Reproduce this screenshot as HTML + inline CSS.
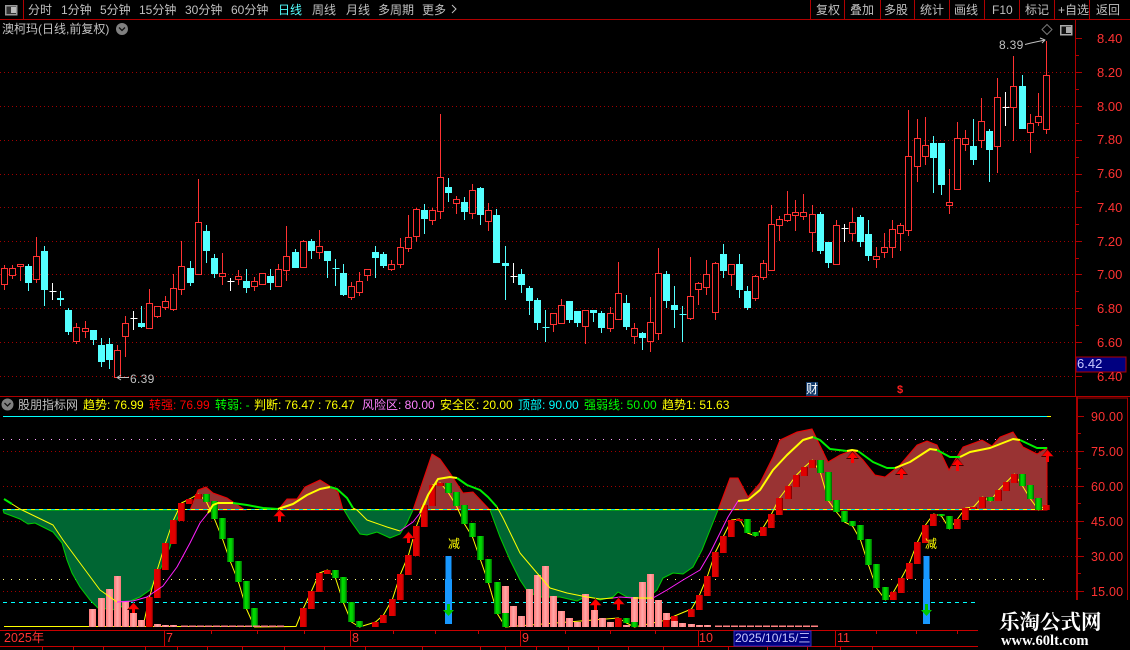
<!DOCTYPE html>
<html lang="zh-CN">
<head>
<meta charset="utf-8">
<title>澳柯玛</title>
<style>
html,body{margin:0;padding:0;background:#000;}
#w{position:relative;width:1130px;height:650px;overflow:hidden;background:#000;font-family:"Liberation Sans","WenQuanYi Zen Hei","Noto Sans CJK SC",sans-serif;font-size:12px;line-height:14px;color:#c0c0c0;}
#w svg{position:absolute;left:0;top:0;}
#w span{position:absolute;white-space:nowrap;}
.r{color:#ff3232;font-size:13px;}
.l{color:#ff3232;font-size:12.5px;letter-spacing:.2px}
.y{color:#ffff00}.g{color:#00ff00}.c{color:#00ffff}.p{color:#ff80ff}.d{color:#ff0000}
</style>
</head>
<body>
<div id="w">
<svg id="s" width="1130" height="650" viewBox="0 0 1130 650" shape-rendering="crispEdges"></svg>

<span style="left:28px;top:3px">分时</span>
<span style="left:61px;top:3px">1分钟</span>
<span style="left:100px;top:3px">5分钟</span>
<span style="left:139px;top:3px">15分钟</span>
<span style="left:185px;top:3px">30分钟</span>
<span style="left:231px;top:3px">60分钟</span>
<span class="c" style="left:278px;top:3px;color:#54ffff">日线</span>
<span style="left:312px;top:3px">周线</span>
<span style="left:346px;top:3px">月线</span>
<span style="left:378px;top:3px">多周期</span>
<span style="left:422px;top:3px">更多</span>
<span style="left:816px;top:3px">复权</span>
<span style="left:850px;top:3px">叠加</span>
<span style="left:884px;top:3px">多股</span>
<span style="left:920px;top:3px">统计</span>
<span style="left:954px;top:3px">画线</span>
<span style="left:992px;top:3px">F10</span>
<span style="left:1025px;top:3px">标记</span>
<span style="left:1058px;top:3px">+自选</span>
<span style="left:1096px;top:3px">返回</span>
<span style="left:2px;top:22px">澳柯玛(日线,前复权)</span>

<span style="left:999px;top:38px;letter-spacing:.3px">8.39</span>
<span style="left:130px;top:372px;letter-spacing:.3px">6.39</span>

<span class="r" style="left:1097px;top:32px">8.40</span>
<span class="r" style="left:1097px;top:66px">8.20</span>
<span class="r" style="left:1097px;top:100px">8.00</span>
<span class="r" style="left:1097px;top:133px">7.80</span>
<span class="r" style="left:1097px;top:167px">7.60</span>
<span class="r" style="left:1097px;top:201px">7.40</span>
<span class="r" style="left:1097px;top:235px">7.20</span>
<span class="r" style="left:1097px;top:268px">7.00</span>
<span class="r" style="left:1097px;top:302px">6.80</span>
<span class="r" style="left:1097px;top:336px">6.60</span>
<span class="r" style="left:1097px;top:370px">6.40</span>
<span style="left:1077px;top:357px;font-size:13px;color:#c8c8ff;z-index:2">6.42</span>

<span style="left:806px;top:382px;width:12px;height:14px;background:#123a6a;color:#fff">财</span>
<span style="left:897px;top:383px;color:#ff2020;font-size:11px;font-weight:bold">$</span>

<span style="left:18px;top:398px;font-size:12px">股朋指标网</span>
<span class="y" style="left:83px;top:398px">趋势: 76.99</span>
<span class="d" style="left:149px;top:398px">转强: 76.99</span>
<span class="g" style="left:215px;top:398px">转弱: -</span>
<span class="y" style="left:254px;top:398px">判断: 76.47 : 76.47</span>
<span class="p" style="left:362px;top:398px">风险区: 80.00</span>
<span class="y" style="left:440px;top:398px">安全区: 20.00</span>
<span class="c" style="left:518px;top:398px">顶部: 90.00</span>
<span class="g" style="left:584px;top:398px">强弱线: 50.00</span>
<span class="y" style="left:662px;top:398px">趋势1: 51.63</span>

<span class="l" style="left:1091px;top:410px">90.00</span>
<span class="l" style="left:1091px;top:445px">75.00</span>
<span class="l" style="left:1091px;top:480px">60.00</span>
<span class="l" style="left:1091px;top:515px">45.00</span>
<span class="l" style="left:1091px;top:550px">30.00</span>
<span class="l" style="left:1091px;top:585px">15.00</span>

<span class="y" style="left:448px;top:537px">减</span>
<span class="y" style="left:925px;top:537px">减</span>

<span style="left:4px;top:631px;color:#ff3232;font-size:12.5px">2025年</span>
<span style="left:166px;top:631px;color:#ff3232;font-size:12.5px">7</span>
<span style="left:352px;top:631px;color:#ff3232;font-size:12.5px">8</span>
<span style="left:522px;top:631px;color:#ff3232;font-size:12.5px">9</span>
<span style="left:699px;top:631px;color:#ff3232;font-size:12.5px">10</span>
<span style="left:735px;top:631px;color:#c8c8ff">2025/10/15/三</span>
<span style="left:837px;top:631px;color:#ff3232;font-size:12.5px">11</span>

<span style="left:999px;top:608px;font-family:'Noto Serif CJK SC','Liberation Serif',serif;font-weight:bold;font-size:20.5px;line-height:24px;color:#fff">乐淘公式网</span>
<span style="left:1001px;top:633px;font-family:'Liberation Serif',serif;font-weight:bold;font-size:14.6px;line-height:16px;color:#fff">www.60lt.com</span>
</div>

<script>
var o='';
function L(x1,y1,x2,y2,c,w,extra){o+='<line x1="'+x1+'" y1="'+y1+'" x2="'+x2+'" y2="'+y2+'" stroke="'+c+'" stroke-width="'+(w||1)+'" '+(extra||'')+'/>';}
function R(x,y,w,h,f,extra){o+='<rect x="'+x+'" y="'+y+'" width="'+w+'" height="'+h+'" fill="'+f+'" '+(extra||'')+'/>';}
function P(d,f,s,w,extra){o+='<path d="'+d+'" fill="'+(f||'none')+'" stroke="'+(s||'none')+'" stroke-width="'+(w||1)+'" '+(extra||'')+'/>';}
function PL(p,c,w){o+='<polyline points="'+p+'" fill="none" stroke="'+c+'" stroke-width="'+(w||1)+'" shape-rendering="auto" stroke-linejoin="round"/>';}

o+='<defs><linearGradient id="gr"><stop offset="0" stop-color="#e00000"/><stop offset=".75" stop-color="#e00000"/><stop offset="1" stop-color="#6a0000"/></linearGradient><linearGradient id="gg"><stop offset="0" stop-color="#006a00"/><stop offset=".35" stop-color="#00e000"/><stop offset=".7" stop-color="#00c800"/><stop offset="1" stop-color="#006000"/></linearGradient><linearGradient id="gp"><stop offset="0" stop-color="#ff7878"/><stop offset=".5" stop-color="#ffa8a8"/><stop offset="1" stop-color="#ff7878"/></linearGradient></defs>';

var RD='#b00000';
// top bars
L(0,19.5,1130,19.5,RD);
L(23.5,0,23.5,19,RD);
[810,844,880,914,949,984,1019,1054,1089].forEach(function(x){L(x+.5,0,x+.5,19,RD);});
// left icon
P('M5.5 5.5h11v9h-11z','#333','#999',1.5);R(11,7,5,6,'#bbb');
// more chevron
P('M452 5l4 4-4 4','none','#c0c0c0',1,'shape-rendering="auto"');
// title chevron
o+='<circle cx="122" cy="29" r="6" fill="#808080" shape-rendering="auto"/>';
P('M119 27.5l3 3 3-3','none','#111',1.3,'shape-rendering="auto"');
// diamond & icon right
P('M1047 24.5l5 5-5 5-5-5z','none','#777',1,'shape-rendering="auto"');
P('M1060.5 25.5h11v9h-11z','#111','#aaa',1.5);R(1066,27,5,6,'#aaa');

// main grid
[72.5,106.5,140.5,174.5,207.5,241.5,274.5,308.5,342.5,376.5].forEach(function(y){L(0,y,1075,y,'#a00000',1,'stroke-dasharray="1 3"');});
// axis
L(1075.5,20,1075.5,397,RD);
[38,72,106,140,174,207,241,274,308,342,376].forEach(function(y){L(1076,y+.5,1082,y+.5,RD);if(y<376)L(1076,y+17.5,1079,y+17.5,RD);});

// candles [type,hi,top,bot,lo]
var C=[['r',265,268.3,283.7,289.7],['r',265,268,274.7,278.7],['r',264,264.3,266.3,281],['c',264,266.3,283,290.7],['r',237,256.3,278.7,282.7],['c',246,251,289.7,305.7],['w',283,290.7,290.7,299.7],['c',291,298,299.7,305.7],['c',308.3,310,332,334.7],['r',323.3,327.3,340.7,343.7],['r',321,328.3,330.7,337.7],['c',330,330,340,344.7],['c',338,345,361.7,366.7],['c',338,344,360,368.7],['r',345.3,350.3,376.7,376.7],['r',316,323.3,335.7,356.7],['w',311,318.3,318.3,329.7],['c',306,323,327,328],['r',289,303.3,327.7,327.7],['r',306,306.3,315.7,317.7],['r',296,301.3,306.7,309.7],['r',274.3,288.3,308.7,310.7],['r',241.3,266.3,288.7,294.7],['c',261,268,283,285.7],['r',179,222.3,273.7,273.7],['c',225,231,251,262.7],['c',254,258,274,278],['r',253,273.3,276.3,285],['w',277.7,280.7,280.7,290.7],['r',270,276.3,278.7,285],['c',269,281,288,293],['r',277,281.3,285.7,290.7],['r',273,273.3,283.7,284.7],['c',269,276,283,289.7],['r',264,269.3,285.7,285.7],['r',226,256.3,269.7,281],['c',249,252,268,268],['r',240,241.3,266.7,267.7],['c',239,241,251,259],['r',230,246.3,251.7,259],['c',251,251,261,278],['d',259,268.3,268.3,286],['c',264,273,295,296],['r',282,286.3,296.7,299.7],['r',272,281.3,291.7,296],['r',269,269.3,274.7,280.7],['c',246,252,258,277.7],['c',252,254,266,268],['r',260,264.3,268.7,270.7],['r',238.3,247,263.7,267.7],
['r',215.3,237.3,247.7,251.7],['r',208.3,209.3,236.3,242],['c',204,210,219,234],['r',208,210.3,219.7,225],['r',114,177.3,210.7,219],['c',178,187,193,202],['r',196,199.3,202.7,214],['c',197,202,212,220],['r',184,190.3,212.7,219],['c',187,188,215,225],['r',203,210.3,220.7,231],['c',209,215,263,263],['c',246,263,266,300],['w',263,276,276,283],['c',269,274,285,293],['c',286,288,301,315],['c',298,300,323,330],['d',310,327.3,327.3,342],['r',313,313.3,323.7,332],['r',299,305.3,322.7,322.7],['c',301,301,320,323],['c',311,311,323,327],['r',310,310.3,325.7,344],['c',310,310,313,322],['c',311,313,328,333],['r',307,313.3,327.7,332],['r',262,293.3,318.7,318.7],['c',295,303,327,330],['r',323,328.3,335.7,344],['c',332,333,338,350],['r',297,322.3,340.7,352],['r',248,273.3,332.7,340],['c',271,274,301,308],['c',286,305,310,328],['d',306,314,314,342],['r',257,296.3,317.7,320],['r',282,283.3,288.7,305],['r',260,274.3,286.7,295],['r',262,263.3,311.7,320],['c',244,254,271,278],['r',264,264.3,273.7,286],['c',254,264,290,298],['c',286,291,308,310],
['r',275,276.3,298,301],['r',260,263.3,276.7,280],['r',205,224.3,269.7,271],['r',216,219.3,224.7,241],['r',191,214.3,219.7,221.7],['r',200,212.3,214.7,231],['r',194,212.3,215.7,220],['r',205,214.3,231.7,252],['c',212,214,251,254],['c',242,242,263,268],['r',220,225.3,263.7,263.7],['w',224,227.7,227.7,242],['r',208,222.3,232.7,241],['c',215,217,242,247],['c',220,234,256,261],['r',247,256.3,258.7,268],['r',233,247.3,251.7,258],['r',220,229.3,246.7,258],['r',223,225.3,232.7,251],['r',110,156.3,229.7,236],['r',119,138.3,165.7,182],['r',117,145.3,155.7,165],['c',136,143,158,193],['c',143,143,185,195],['r',169,202.3,204.7,214],['r',122,138.3,188.7,188.7],['r',130,138.3,143.7,151],['c',119,146,160,165],['r',98,121.3,139.7,148],['c',129,131,150,182],['r',78,97.3,145.7,173],['w',92,107.3,107.3,126],['r',56,86.3,106.7,141],['c',75,86,129,129],['r',114,123.3,131.7,153],['r',93,116.3,121.7,126],['r',41,75.3,128.7,133.7]];
var RED='#ff3232',CY='#54ffff';
C.forEach(function(c,i){
 var x=Math.floor(4.3+i*8.077)+.5,t=c[0],hi=Math.round(c[1]),top=Math.round(c[2]),bot=Math.round(c[3]),lo=Math.round(c[4]);
 if(t==='w'||t==='d'){var col=t==='w'?'#fff':CY;L(x,hi,x,lo,col);L(x-3,top+.5,x+4,top+.5,col);return;}
 if(t==='c'){L(x,hi,x,lo,CY);R(x-3.5,top,7,Math.max(1,bot-top),CY);return;}
 if(hi<top)L(x,hi,x,top,RED);if(lo>bot)L(x,bot,x,lo,RED);
 o+='<rect x="'+(x-3)+'" y="'+(top+.5)+'" width="6" height="'+Math.max(1,bot-top)+'" fill="#000" stroke="'+RED+'"/>';
});
// extreme markers
PL('1025,44.5 1031,43 1045,40','#c0c0c0');PL('1040,38 1045,40 1042,43','#c0c0c0');
PL('129,377.5 117,377.5','#c0c0c0');PL('121,375 117,377.5 121,380','#c0c0c0');
o+='<rect x="1076" y="357" width="50" height="15" fill="#000080" stroke="#b00000"/>';
// pane divider
L(0,396.5,1130,396.5,RD);
L(1077,398,1128,398,RD);
// header chevron
o+='<circle cx="7.5" cy="404.5" r="6" fill="#808080" shape-rendering="auto"/>';
P('M4.5 403l3 3 3-3','none','#111',1.3,'shape-rendering="auto"');

// lower axis
R(1076,397,2,203,'#a80000');
[416,451,486,521,556,591].forEach(function(y){L(1078,y+.5,1084,y+.5,RD);if(y<591)L(1078,y+17.5,1081,y+17.5,RD);});
L(1127.5,398,1127.5,600,'#a00000');
// lower grid
[451.5,486.5,521.5,556.5,591.5].forEach(function(y){L(3,y,1076,y,'#a00000',1,'stroke-dasharray="1 3"');});
L(3,416.5,1047,416.5,'#00ffff');L(1047,416.5,1051,416.5,'#ffff00');
L(3,439.5,1047,439.5,'#ffa0ff',1,'stroke-dasharray="1 7"');
L(3,579.5,1047,579.5,'#ffff80',1,'stroke-dasharray="1 7"');
L(3,602.5,976,602.5,'#00ffff',1,'stroke-dasharray="4 4"');

// green areas
var GF='#006633';
function area(p,f,e){o+='<polygon points="'+p+'" fill="'+f+'" stroke="'+e+'" shape-rendering="auto"/>';}
o+='<polygon points="3,510 4,513 20,519 28,524 35,523 43,527 53,532 62,543 67,560 72,573 80,587 90,600 98,608 117,610 128,602 140,597 150,590 157,577 163,563 170,547 177,520 180,510" fill="'+GF+'" stroke="#00d000" stroke-width="1" shape-rendering="auto"/>';
area('344,510 350,520 360,534 367,535 377,532 390,538 400,534 407,523 413,510',GF,'#00d000');
area('490,510 500,537 510,560 520,580 528,592 540,597 560,597 577,601 587,596 600,600 613,597 618,592 627,597 647,599 657,590 663,578 673,573 683,574 693,567 702,550 710,530 718,510',GF,'#00d000');
// red areas
var RF='#993333';
area('190,510 198,490 206,487 213,493 227,498 245,510',RF,'#f00000');
area('278,510 287,499 297,499 305,487 320,480 333,488 338,492 343,510',RF,'#f00000');
area('413,510 432,454 440,459 450,473 463,493 473,492 490,510',RF,'#f00000');
area('718,510 730,478 738,478 748,497 760,483 773,457 780,440 797,432 812,429 828,462 840,455 853,450 863,460 875,475 885,477 900,465 917,445 927,441 937,445 949,470 963,447 982,440 992,446 1000,437 1013,432 1023,447 1037,454 1047,448 1047,510',RF,'#f00000');
// 50 line
L(3,509.5,1047,509.5,'#00e0e0',1,'stroke-dasharray="4 4"');
L(7,509.5,1047,509.5,'#ffff00',1,'stroke-dasharray="4 4"');

// flat baseline
L(4,626.5,296,626.5,'#ffff00');

// bars [type,x,top,bot]
var B=[['r',149.5,597,627],['r',157.5,569,598],['r',165.5,543,570],['r',173.5,520,544],['r',181.5,503,521],['r',189.5,499,504],['r',198.5,494,499],['g',206.5,494,502],['g',214.5,501,519],['g',222.5,518,539],['g',230.5,538,562],['g',238.5,561,582],['g',246.5,581,609],['g',254.5,608,627],['r',303.5,608,627],['r',311.5,591,609],['r',319.5,573,592],['r',327.5,570,574],['g',335.5,570,578],['g',343.5,577,603],['g',351.5,602,622],['g',359.5,621,627],['r',375.5,622,627],['r',383.5,615,623],['r',392.5,599,616],['r',400.5,574,600],['r',408.5,555,575],['r',416.5,526,556],['r',424.5,505,527],['r',432.5,485,506],['r',440.5,483,486],['g',448.5,483,493],['g',456.5,492,506],['g',464.5,505,524],['g',472.5,523,537],['g',480.5,536,560],['g',488.5,559,583],['g',497.5,582,614],['g',505.5,613,627],['r',618.5,618,627],['g',626.5,618,623],['g',634.5,622,627],['r',666.5,620,627],['r',674.5,616,621],['r',691.5,609,617],['r',699.5,595,610],['r',707.5,576,596],['r',715.5,552,577],['r',723.5,536,553],['r',731.5,520,537],['r',739.5,519,521],['g',747.5,519,533],['g',755.5,532,536],['r',763.5,527,536],['r',771.5,514,528],['r',779.5,498,515],['r',788.5,486,499],['r',796.5,475,487],['r',804.5,467,476],['r',812.5,460,468],['g',820.5,460,473],['g',828.5,472,501],['g',836.5,500,512],['g',844.5,511,522],['g',852.5,521,526],['g',860.5,525,540],['g',868.5,539,565],['g',876.5,564,588],['g',885.5,587,600],['r',893.5,592,600],['r',901.5,578,593],['r',909.5,563,579],['r',917.5,542,564],['r',925.5,525,543],['r',933.5,514,526],['g',941.5,514,516],['g',949.5,516,529],['r',957.5,519,529],['r',965.5,508,520],['r',973.5,507,509],['r',982.5,497,508],['g',990.5,497,501],['r',998.5,490,501],['r',1006.5,482,491],['r',1014.5,474,483],['g',1022.5,474,486],['g',1030.5,485,499],['g',1038.5,498,510],['r',1046.5,505,510]];
// thin KD connector
var kp='143,626.5';
B.forEach(function(b){kp+=' '+b[1]+','+(b[0]==='r'?b[2]:b[3]);});
kp=kp.replace('254.5,627','254.5,627 296,626.5');
PL(kp,'#ffff00');
B.forEach(function(b){R(b[1]-3.5,b[2],7,b[3]-b[2],b[0]==='r'?'url(#gr)':'url(#gg)');});

// pink bars
var K=[[92.5,609],[101.5,598],[109.5,589],[117.5,576],[125.5,601],[133.5,613],[141.5,620],[157.5,624],[165.5,625],[173.5,625],[505.5,586,613],[513.5,606],[521.5,616],[529.5,589],[537.5,575],[545.5,566],[553.5,596],[561.5,611],[569.5,618],[577.5,622],[585.5,594],[594.5,610],[602.5,618],[610.5,622],[626.5,625],[634.5,597,622],[642.5,582],[650.5,574],[658.5,600],[666.5,613,620],[674.5,621],[682.5,623],[691.5,624],[699.5,625],[707.5,625]];
K.forEach(function(k){R(k[0]-3.5,k[1],7,(k[2]||627)-k[1],'url(#gp)');});
for(var x=181;x<282;x+=8)R(x,625.5,7,1.5,'#ff8080');
for(var x=715;x<816;x+=8)R(x,625.5,7,1.5,'#ff8080');

// trend lines
PL('12,504 20,509 53,525 63,540 80,563 100,590 117,602','#ffff00');
PL('117,602 133,601 147,597 163,586 177,567 190,543 200,523 208,513','#ff20ff');
PL('353,508 357,510 367,520 387,527 400,531','#ffff00');
PL('400,531 413,522 420,513','#ff20ff');
PL('497,507 503,518 520,553 537,573 550,588 567,593 587,597 600,599 613,598','#ffff00');
PL('613,598 620,597 633,598','#ff20ff');
PL('633,598 653,598','#ffff00');
PL('653,598 667,590 683,580 700,570 710,553 720,533 728,517 738,501','#ff20ff');
var YT='#ffff00',GT='#00f000';
PL('4,499 12,504',GT,2);
PL('208,513 213,505 218,503 233,503',YT,2);
PL('233,503 247,505 263,508 278,509',GT,2);
PL('278,509 293,504 307,495 320,489 330,487',YT,2);
PL('330,487 337,489 347,498 353,508',GT,2);
PL('420,513 428,495 438,479 450,477 457,478',YT,2);
PL('457,478 467,485 480,490 488,497 497,507',GT,2);
PL('738,501 748,500 760,490 773,470 787,455 803,440 813,437',YT,2);
PL('813,437 820,440 830,449 847,451',GT,2);
PL('847,451 852,450 858,451',YT,2);
PL('858,451 873,462 887,468 895,468',GT,2);
PL('895,468 910,462 930,449 937,450',YT,2);
PL('937,450 950,457 960,457',GT,2);
PL('960,457 970,452 990,448 1013,439 1020,440',YT,2);
PL('1020,440 1037,448 1047,448',GT,2);

// up arrows
[[133.5,603,613],[279.5,510,522],[408.5,532,543],[595.5,599,610],[618.5,598,610],[852.5,452,463],[901.5,468,479],[957.5,459,471],[1047,450,462]].forEach(function(a){
 var x=Math.floor(a[0])+.5,t=a[1],e=a[2];
 o+='<polygon points="'+x+','+(t-1)+' '+(x+6.5)+','+(t+7)+' '+(x-6.5)+','+(t+7)+'" fill="#400000" shape-rendering="auto"/>';
 o+='<polygon points="'+x+','+t+' '+(x+5.5)+','+(t+6)+' '+(x-5.5)+','+(t+6)+'" fill="#ff0000" shape-rendering="auto"/>';
 R(x-1.5,t+6,3,e-t-6,'#ff0000');
});
// blue bars + green down arrows
[448.5,926.5].forEach(function(x){
 R(x-3,556,6,23,'#1898ff');R(x-3.5,579,7,45,'#1898ff');
 R(x-1.5,604,3,7,'#00c800');
 o+='<polygon points="'+(x-5.5)+',610 '+(x+5.5)+',610 '+x+',616" fill="#00c800" shape-rendering="auto"/>';
});

// watermark black box
R(977,600,153,50,'#000');
// date rows
L(0,630.5,978,630.5,'#c80000');L(0,646.5,978,646.5,'#c80000');
[164,350,520,698,835].forEach(function(x){L(x+.5,631,x+.5,646,'#c80000');});
[211,257,304,393,435,478,565,610,655,876,916,957].forEach(function(x){L(x+.5,631,x+.5,634,'#c80000');});
[42,73,103,145,177,207,242,284,324,365,422,480,505,536,568,598,628,663,728,767,807,840,872].forEach(function(x){L(x+.5,647,x+.5,650,'#c80000');});
R(734,631,77,15,'#000080','stroke="#3030c0"');
document.getElementById('s').innerHTML=o;
</script>
</body>
</html>
